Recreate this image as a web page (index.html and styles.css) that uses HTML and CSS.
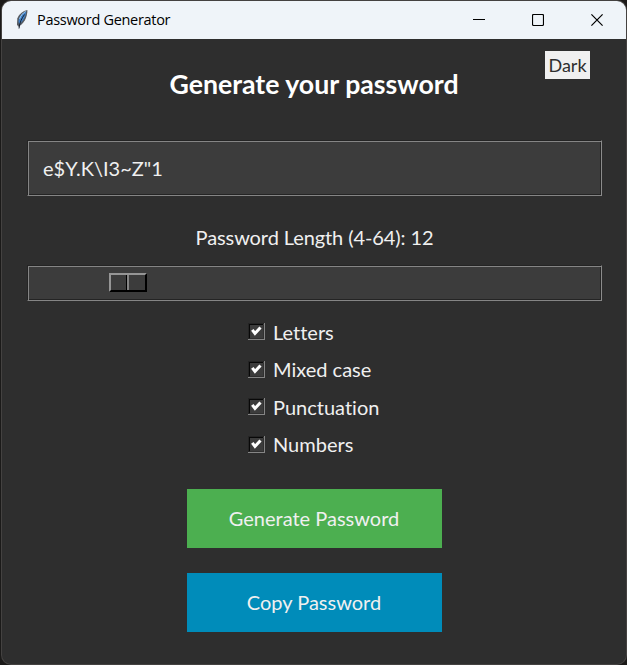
FILE: index.html
```html
<!DOCTYPE html>
<html lang="en">
<head>
<meta charset="utf-8">
<title>Password Generator</title>
<link rel="stylesheet" href="styles.css">
</head>
<body>
<div class="window">
  <header class="titlebar">
    <svg class="feather" width="14" height="22" viewBox="0 0 14 22">
      <path d="M12.400 1C8 1.800 3.800 5.500 2.300 9.500L2 15.500L3.200 17.700C5.500 17 8.300 14 9.900 11.200C11.400 8.500 12.600 4 12.400 1Z" fill="#565b62"/>
      <path d="M11.200 2.300C7.500 4 4.300 7.500 3.500 12L4 15.200C7.300 13.500 10.700 8 11.200 2.300Z" fill="#3f82cb"/>
      <path d="M10.600 2.400C8 4 5.700 6.500 4.600 9.800" fill="none" stroke="#a9cff0" stroke-width="1"/>
      <path d="M9.500 5.500C7 9 4.600 13 4 19.500" fill="none" stroke="#17202d" stroke-width="1"/>
    </svg>
    <span class="caption">Password Generator</span>
    <div class="controls">
      <svg width="12" height="12" viewBox="0 0 12 12"><path d="M0 5.500H12"/></svg>
      <svg width="12" height="12" viewBox="0 0 12 12"><rect x=".5" y=".5" width="11" height="11" rx="1.200"/></svg>
      <svg width="12" height="12" viewBox="0 0 12 12"><path d="M.4.4L11.600 11.600M11.600.4L.4 11.600"/></svg>
    </div>
  </header>
  <main class="content">
    <button class="theme">Dark</button>
    <h1 class="heading"><span>Generate your password</span></h1>
    <div class="groove field"><span>e$Y.K\I3~Z"1</span></div>
    <p class="length"><span>Password Length (4-64): 12</span></p>
    <div class="groove slider"><div class="thumb"><i></i><i></i></div></div>
    <div class="options">
      <label class="option"><svg class="box" width="17" height="17" viewBox="0 0 17 17"><path class="lo" d="M0 16V0H17V1H2V16Z"/><path class="black" d="M1 15V1H15V2H2V15Z"/><path class="hi" d="M0 16H16V0H17V17H0Z"/><path class="mid" d="M2 15H15V2H16V16H2Z"/><path class="tick" d="M4.300 6.800L7 10.500L12.500 4.600"/></svg><span>Letters</span></label>
      <label class="option"><svg class="box" width="17" height="17" viewBox="0 0 17 17"><path class="lo" d="M0 16V0H17V1H2V16Z"/><path class="black" d="M1 15V1H15V2H2V15Z"/><path class="hi" d="M0 16H16V0H17V17H0Z"/><path class="mid" d="M2 15H15V2H16V16H2Z"/><path class="tick" d="M4.300 6.800L7 10.500L12.500 4.600"/></svg><span>Mixed case</span></label>
      <label class="option"><svg class="box" width="17" height="17" viewBox="0 0 17 17"><path class="lo" d="M0 16V0H17V1H2V16Z"/><path class="black" d="M1 15V1H15V2H2V15Z"/><path class="hi" d="M0 16H16V0H17V17H0Z"/><path class="mid" d="M2 15H15V2H16V16H2Z"/><path class="tick" d="M4.300 6.800L7 10.500L12.500 4.600"/></svg><span>Punctuation</span></label>
      <label class="option"><svg class="box" width="17" height="17" viewBox="0 0 17 17"><path class="lo" d="M0 16V0H17V1H2V16Z"/><path class="black" d="M1 15V1H15V2H2V15Z"/><path class="hi" d="M0 16H16V0H17V17H0Z"/><path class="mid" d="M2 15H15V2H16V16H2Z"/><path class="tick" d="M4.300 6.800L7 10.500L12.500 4.600"/></svg><span>Numbers</span></label>
    </div>
    <button class="action generate">Generate Password</button>
    <button class="action copy">Copy Password</button>
  </main>
</div>
</body>
</html>
```

FILE: styles.css
```css
* { box-sizing: border-box; }
body {
  margin: 0;
  height: 665px;
  padding: 1px 1px 0 2px;
  background: #1b1a19;
  font-family: Lato, sans-serif;
  font-size: 20px;
  font-variant-ligatures: none;
  color: #f0f0f0;
  overflow: hidden;
}
.window {
  height: 663px;
  border-radius: 9px;
  background: #2e2e2e;
  overflow: hidden;
  box-shadow: 0 0 0 1px #444241;
}
.titlebar {
  display: flex;
  align-items: center;
  height: 38px;
  padding-left: 13px;
  background: #eff4f9;
  color: #000;
}
.caption {
  margin-left: 8px;
  font: 14.500px/20px "Open Sans", sans-serif;
  letter-spacing: -.3px;
  white-space: nowrap;
}
.controls {
  display: flex;
  gap: 47px;
  margin-left: auto;
  padding-right: 23px;
}
.controls svg { fill: none; stroke: #000; stroke-width: 1.200; }
.content {
  position: relative;
  display: flex;
  flex-direction: column;
  align-items: center;
  height: 625px;
  padding-top: 28px;
}
button { border: 0; padding: 0; font-family: inherit; font-variant-ligatures: none; }
.theme {
  position: absolute;
  left: 543px;
  top: 12px;
  width: 45px;
  height: 28px;
  background: #f0f0f0;
  color: #2e2e2e;
  font-size: 18px;
  line-height: 28px;
}
.heading {
  margin: 0;
  height: 34px;
  font-size: 26.700px;
  line-height: 34px;
  font-weight: 700;
  color: #fff;
  white-space: nowrap;
}
.groove {
  width: 575px;
  margin-left: 1px;
  background: #3c3c3c;
  border: 1px solid;
  border-color: #242424 #8b8b8b #858585 #242424;
  box-shadow: inset 1px 1px #858585, inset -1px -1px #242424;
}
.field {
  height: 56px;
  margin-top: 39px;
  padding-left: 15px;
  line-height: 54px;
  white-space: nowrap;
}
.length {
  height: 30px;
  margin: 26px 0 0 1px;
  line-height: 30px;
  letter-spacing: -.1px;
}
.slider {
  height: 36px;
  margin-top: 13px;
  padding: 7px 0 0 81px;
}
.thumb {
  display: flex;
  width: 38px;
  height: 19px;
  border: 2px solid;
  border-color: #969696 #000 #000 #969696;
}
.thumb i { width: 16px; border-right: 1px solid #000; }
.thumb i + i { width: 18px; border-right: 0; border-left: 2px solid #858585; }
.options {
  display: flex;
  flex-direction: column;
  align-self: flex-start;
  margin: 12px 0 0 246px;
}
.option {
  display: flex;
  align-items: center;
  gap: 8px;
  height: 37.500px;
  white-space: nowrap;
}
.box { background: #3c3c3c; }
.lo { fill: #242424; }
.black { fill: #080808; }
.hi { fill: #858585; }
.mid { fill: #303030; }
.tick { fill: none; stroke: #fff; stroke-width: 3; }
.action {
  width: 255px;
  height: 59px;
  flex: none;
  padding-bottom: 1px;
  color: #f0f0f0;
  font-size: 20px;
}
.generate { margin-top: 26px; background: #4caf50; }
.copy { margin-top: 25px; background: #008cba; }
```
